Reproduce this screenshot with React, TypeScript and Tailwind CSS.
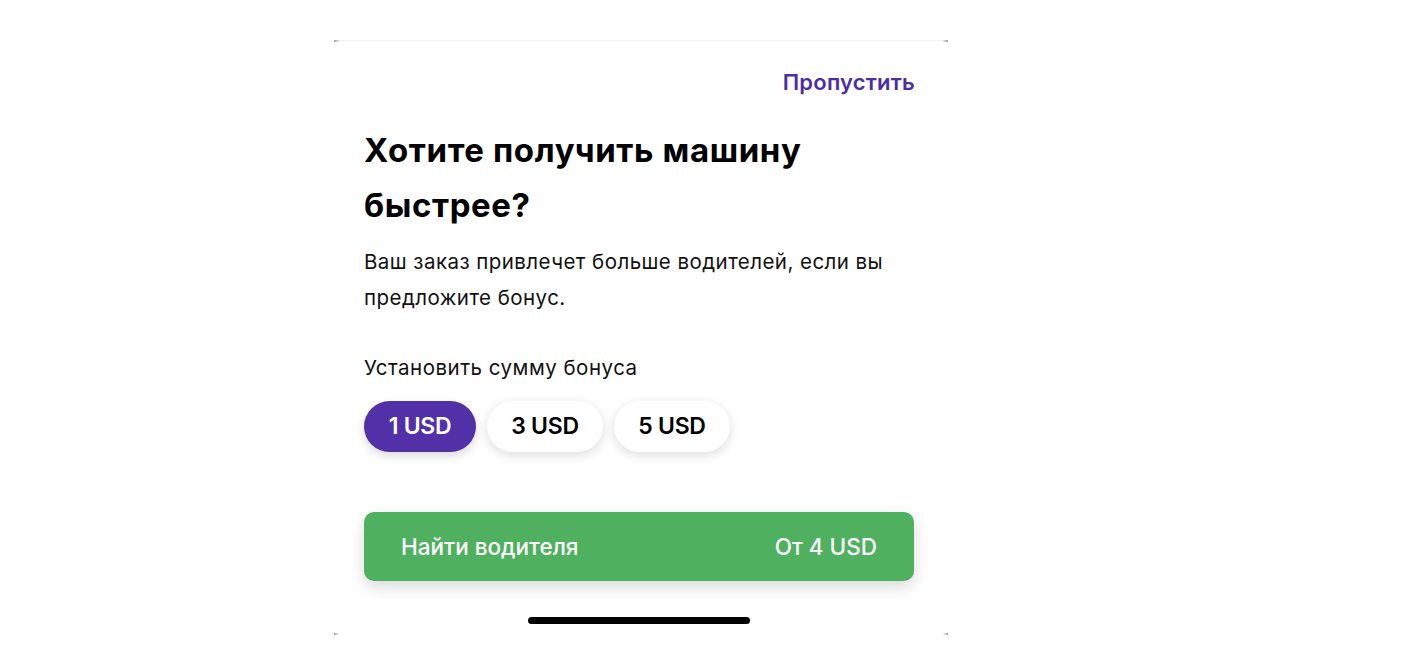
import React from "react";

export default function App() {
  const font = { fontFamily: "Inter, 'Noto Sans', sans-serif" };
  return (
    <div className="w-[1428px] h-[672px] bg-white flex justify-center" style={font}>
      <div className="relative mt-[40px] ml-[-146px] w-[614px] h-[596px] bg-white border-t border-[#f1f1f1] flex flex-col">
        <span className="absolute left-0 top-[-1px] w-[6px] h-[2px] bg-gradient-to-r from-[#9a9a9a] to-transparent" />
        <span className="absolute right-0 top-[-1px] w-[6px] h-[2px] bg-gradient-to-l from-[#9a9a9a] to-transparent" />
        <span className="absolute left-0 bottom-[1px] w-[5px] h-[2px] bg-gradient-to-r from-[#9a9a9a] to-transparent" />
        <span className="absolute right-0 bottom-[1px] w-[5px] h-[2px] bg-gradient-to-l from-[#9a9a9a] to-transparent" />

        <div className="flex justify-end pr-[33px] pt-[27px]">
          <span className="text-[22px] leading-[28px] font-semibold text-[#4b2ea6] tracking-[0.2px]">Пропустить</span>
        </div>

        <div className="pl-[30px] pr-[33px] pt-[27px]">
          <h1 className="text-[33px] leading-[55px] font-bold text-black tracking-[0.6px] whitespace-nowrap">
            Хотите получить машину
            <br />
            быстрее?
          </h1>
          <p className="mt-[11px] text-[20.5px] leading-[36px] text-[#111] tracking-[0.45px] whitespace-nowrap">
            Ваш заказ привлечет больше водителей, если вы
            <br />
            предложите бонус.
          </p>
          <p className="mt-[38px] text-[20.5px] leading-[28px] text-[#111] tracking-[0.5px]">Установить сумму бонуса</p>

          <div className="mt-[19px] flex gap-[11px]">
            <div className="w-[112px] h-[51px] rounded-full bg-[#5230a8] text-white flex items-center justify-center text-[23px] font-semibold tracking-[-0.3px] shadow-[0_4px_10px_rgba(0,0,0,0.15)]">
              1 USD
            </div>
            <div className="w-[116px] h-[51px] rounded-full bg-white text-black flex items-center justify-center text-[23px] font-semibold tracking-[-0.3px] shadow-[0_3px_12px_rgba(0,0,0,0.14)]">
              3 USD
            </div>
            <div className="w-[116px] h-[51px] rounded-full bg-white text-black flex items-center justify-center text-[23px] font-semibold tracking-[-0.3px] shadow-[0_3px_12px_rgba(0,0,0,0.14)]">
              5 USD
            </div>
          </div>

          <div className="mt-[60px] w-[550px] h-[69px] rounded-[10px] bg-[#4fb160] flex items-center justify-between px-[37px] shadow-[0_6px_16px_rgba(0,0,0,0.15)]">
            <span className="text-[22.5px] font-medium text-white tracking-[0px]">Найти водителя</span>
            <span className="text-[22.5px] font-medium text-white tracking-[0px]">От 4 USD</span>
          </div>
        </div>

        <div className="flex justify-center mt-[36px]">
          <div className="w-[222px] h-[7px] rounded-full bg-black ml-[-4px]" />
        </div>
      </div>
    </div>
  );
}
